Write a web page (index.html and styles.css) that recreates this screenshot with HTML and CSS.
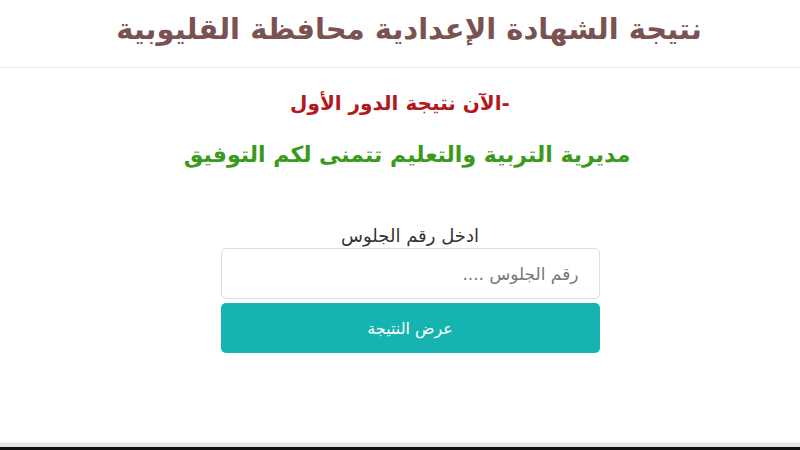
FILE: index.html
```html
<!DOCTYPE html>
<html lang="ar" dir="rtl">
<head>
<meta charset="utf-8">
<link rel="stylesheet" href="styles.css">
</head>
<body>
<div class="page">
  <header class="top">
    <h1 class="title">نتيجة الشهادة الإعدادية محافظة القليوبية</h1>
  </header>
  <main class="content">
    <p class="notice">-الآن نتيجة الدور الأول</p>
    <p class="wish">مديرية التربية والتعليم تتمنى لكم التوفيق</p>
    <form class="form">
      <label class="label" for="seat">ادخل رقم الجلوس</label>
      <input class="input" id="seat" type="text" placeholder="رقم الجلوس ....">
      <button class="btn" type="button">عرض النتيجة</button>
    </form>
  </main>
  <div class="bottom"></div>
</div>
</body>
</html>
```
FILE: styles.css
```css
* { box-sizing: border-box; }
html, body { margin: 0; padding: 0; background: #fff; }
body { font-family: "DejaVu Sans", "Noto Sans", sans-serif; width: 800px; height: 450px; overflow: hidden; }
.page { display: flex; flex-direction: column; height: 450px; }
.top {
  height: 68px;
  border-bottom: 1px solid #ececec;
  display: flex;
  justify-content: center;
  align-items: center;
  padding-left: 18px;
}
.title {
  margin: 0;
  font-size: 29px;
  font-weight: bold;
  color: #7b5252;
  padding-bottom: 10px;
}
.content {
  flex: 1;
  display: flex;
  flex-direction: column;
  align-items: center;
}
.notice {
  margin: 22px 0 0 0;
  font-size: 20px;
  font-weight: bold;
  color: #b2181c;
  line-height: 26px;
}
.wish {
  margin: 24px 0 0 0;
  font-size: 22px;
  font-weight: bold;
  color: #3b9a1b;
  line-height: 30px;
  margin-left: 14px;
}
.form {
  margin-top: 56px;
  width: 379px;
  display: flex;
  flex-direction: column;
  align-items: stretch;
  margin-left: 20px;
}
.label {
  text-align: center;
  font-size: 18px;
  color: #333;
  line-height: 20px;
  margin-bottom: 2px;
}
.input {
  height: 51px;
  border: 1px solid #ddd;
  border-radius: 5px;
  padding: 0 20px;
  font-family: inherit;
  font-size: 17px;
  color: #333;
  text-align: right;
  direction: rtl;
}
.input::placeholder { color: #777; }
.btn {
  margin-top: 4px;
  height: 50px;
  border: none;
  border-radius: 5px;
  background: #17b3b0;
  color: #fff;
  font-family: inherit;
  font-size: 16px;
}
.bottom {
  height: 8px;
  background: #e6e6e6;
  border-top: 1px solid #f0f0f0;
  border-bottom: 3px solid #111;
}
```
